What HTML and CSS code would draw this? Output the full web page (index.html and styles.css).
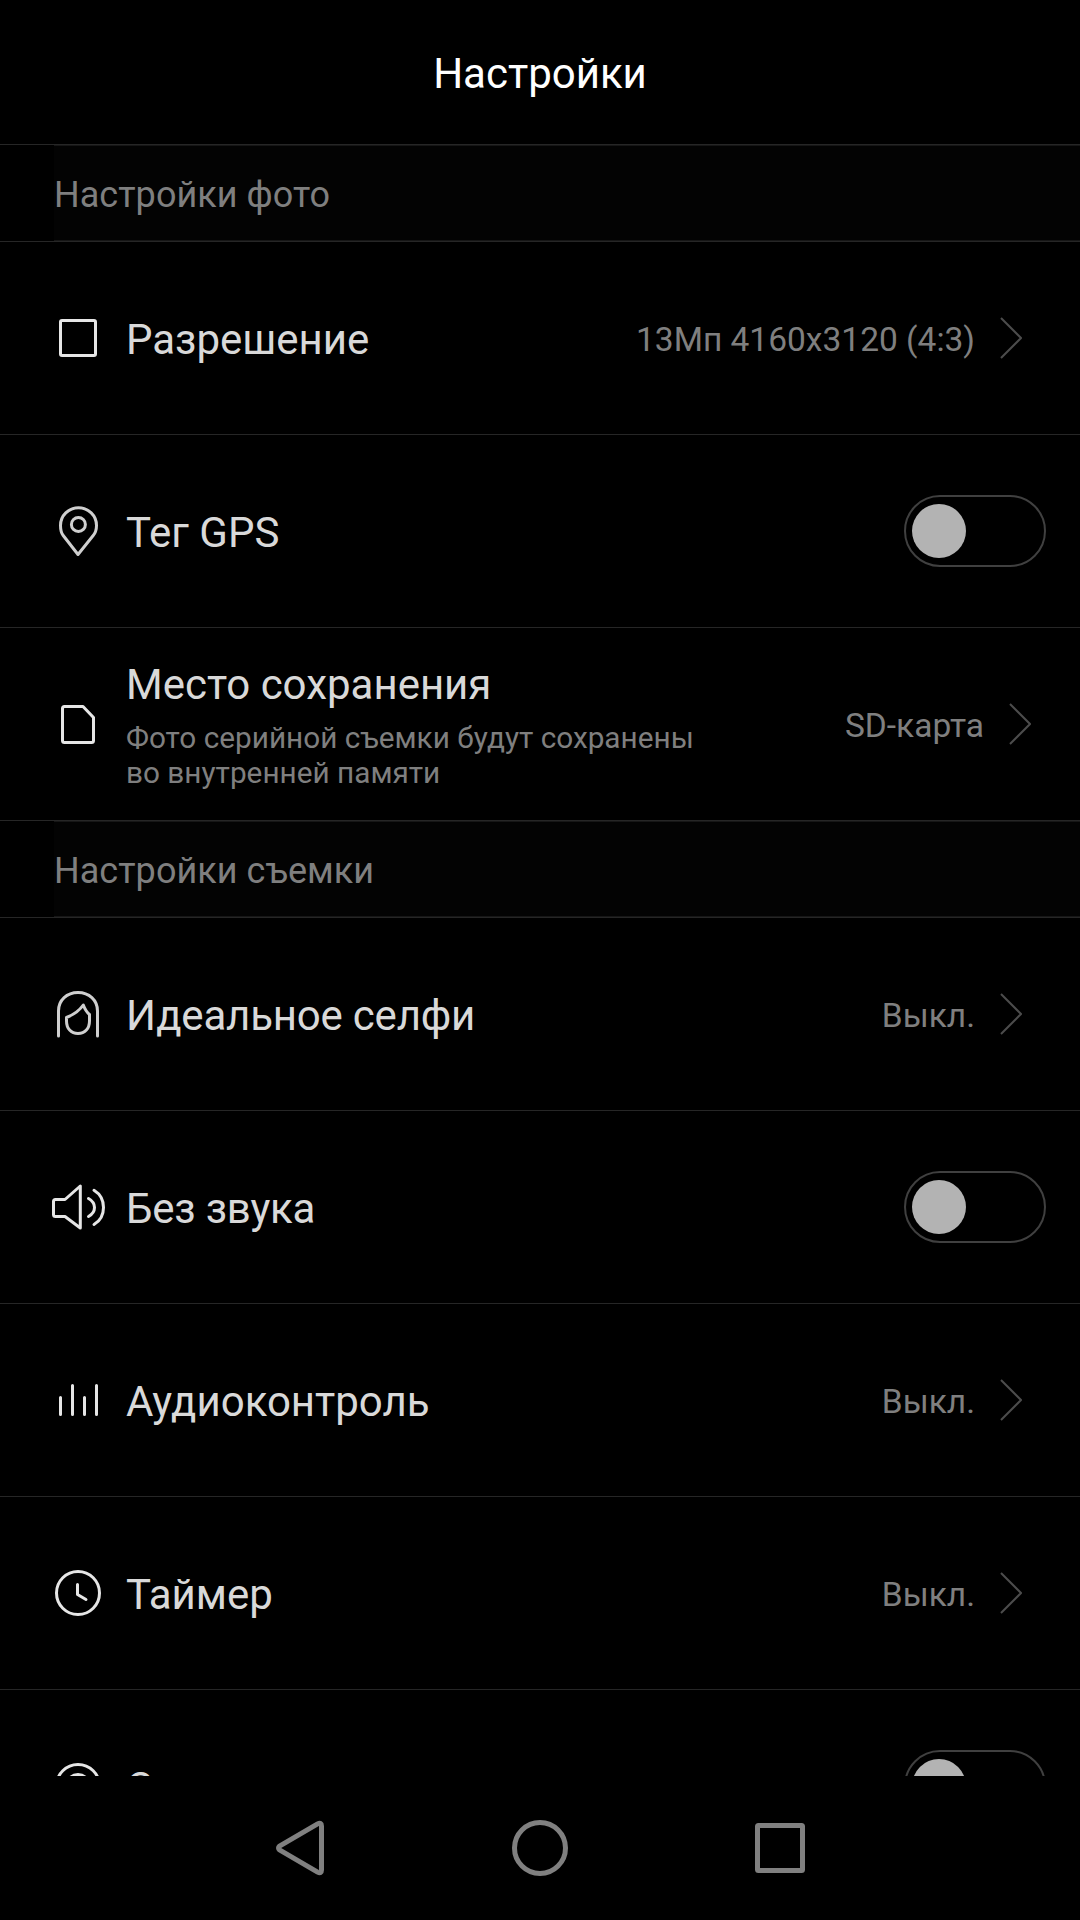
FILE: index.html
```html
<!DOCTYPE html>
<html lang="ru">
<head>
<meta charset="utf-8">
<title>Настройки</title>
<link rel="stylesheet" href="styles.css">
</head>
<body>
<div class="screen">
  <header class="header"><h1 class="header-title">Настройки</h1></header>
  <main class="list">
    <div class="section"><h2 class="section-title">Настройки фото</h2></div>

    <div class="row">
      <svg class="icon" viewBox="0 0 60 60"><rect x="12.5" y="12.5" width="35" height="35" rx="1.5"/></svg>
      <div class="label"><span class="name">Разрешение</span></div>
      <span class="value">13Мп 4160x3120 (4:3)</span>
      <svg class="chevron" viewBox="0 0 22 42"><path d="M1 1L21 21L1 41"/></svg>
    </div>

    <div class="row">
      <svg class="icon soft" viewBox="0 0 60 60"><path d="M30 53.5L15.200 34.500C12.800 31.500 12.500 27.500 12.500 24.500A18 17.800 0 0 1 48.500 24.500C48.500 27.500 47.700 31.500 45.200 34.500Z"/><circle cx="30.400" cy="23.400" r="7"/></svg>
      <div class="label"><span class="name">Тег GPS</span></div>
      <div class="toggle"><div class="knob"></div></div>
    </div>

    <div class="row">
      <svg class="icon" viewBox="0 0 60 60"><path d="M16.500 12.500H35L45.500 23.500V46.500Q45.500 48.500 43.500 48.500H16.500Q14.500 48.500 14.500 46.500V14.500Q14.500 12.500 16.500 12.500Z"/></svg>
      <div class="label label-tall">
        <span class="name">Место сохранения</span>
        <span class="note">Фото серийной съемки будут сохранены<br>во внутренней памяти</span>
      </div>
      <span class="value">SD-карта</span>
      <svg class="chevron chevron-wide" viewBox="0 0 22 42"><path d="M1 1L21 21L1 41"/></svg>
    </div>

    <div class="section"><h2 class="section-title">Настройки съемки</h2></div>

    <div class="row">
      <svg class="icon soft" viewBox="0 0 60 60"><path d="M10.500 52V27C10.500 16 19 8.500 30 8.500S49.500 16 49.500 27V52"/><path d="M18.500 33.500C26 30.500 31.500 26.500 35.300 21C37 25.500 39 28.500 41.500 30.500V37C41.500 44.500 37 49.500 30 49.500S18.500 44.500 18.500 37Z"/></svg>
      <div class="label"><span class="name name-tight">Идеальное селфи</span></div>
      <span class="value">Выкл.</span>
      <svg class="chevron" viewBox="0 0 22 42"><path d="M1 1L21 21L1 41"/></svg>
    </div>

    <div class="row">
      <svg class="icon" viewBox="0 0 60 60"><path d="M7.500 22.500H17L32.300 9V51L17 39.500H7.500Q5.500 39.500 5.500 37.500V24.500Q5.500 22.500 7.500 22.500Z"/><path d="M40.500 21.500C44 23.500 46.500 27 46.500 30.500S44 37.500 40.500 39.500M46 13.300C52 17 55.500 23.500 55.500 30.500S52 44 46 47.500"/></svg>
      <div class="label"><span class="name name-tight">Без звука</span></div>
      <div class="toggle"><div class="knob"></div></div>
    </div>

    <div class="row">
      <svg class="icon" viewBox="0 0 60 60"><path d="M12.500 27.500V44.500M24.500 15.500V44.500M36.500 27.500V44.500M48.500 15.500V44.500"/></svg>
      <div class="label"><span class="name">Аудиоконтроль</span></div>
      <span class="value">Выкл.</span>
      <svg class="chevron" viewBox="0 0 22 42"><path d="M1 1L21 21L1 41"/></svg>
    </div>

    <div class="row">
      <svg class="icon" viewBox="0 0 60 60"><circle cx="30" cy="30" r="21.500"/><path d="M29.500 21.500V31.500L38 36.500"/></svg>
      <div class="label"><span class="name">Таймер</span></div>
      <span class="value">Выкл.</span>
      <svg class="chevron" viewBox="0 0 22 42"><path d="M1 1L21 21L1 41"/></svg>
    </div>

    <div class="row">
      <svg class="icon" viewBox="0 0 60 60"><circle cx="30" cy="30" r="21.500"/><circle cx="30" cy="30" r="11.500"/></svg>
      <div class="label"><span class="name">Сенсорная съемка</span></div>
      <div class="toggle"><div class="knob"></div></div>
    </div>
  </main>
  <nav class="navbar">
    <svg class="nav-icon" viewBox="0 0 60 60"><path d="M47.600 5.900Q51.500 3.800 51.500 8V52Q51.500 56.200 47.600 54.100L9.500 31.800Q7.500 30 9.500 28.200Z"/></svg>
    <svg class="nav-icon" viewBox="0 0 60 60"><circle cx="30" cy="30" r="25.500"/></svg>
    <svg class="nav-icon" viewBox="0 0 60 60"><rect x="7.500" y="7.500" width="45" height="45" rx="1"/></svg>
  </nav>
</div>
</body>
</html>
```
FILE: styles.css
```css
* {
  box-sizing: border-box;
}

body {
  margin: 0;
  background: #000;
  font-family: Roboto, "Noto Sans", sans-serif;
}

.screen {
  display: flex;
  flex-direction: column;
  width: 1080px;
  height: 1920px;
  overflow: hidden;
  background: #000;
}

.header {
  display: flex;
  flex: none;
  align-items: center;
  justify-content: center;
  height: 145px;
  padding-top: 3px;
  border-bottom: 1px solid #262626;
}

.header-title {
  margin: 0;
  color: #fff;
  font-size: 42px;
  font-weight: 400;
  line-height: 50px;
}

.list {
  flex: 1;
  min-height: 0;
  overflow: hidden;
}

.section {
  height: 97px;
  padding-left: 54px;
  border-bottom: 1px solid #262626;
}

.section-title {
  display: flex;
  align-items: center;
  height: 96px;
  margin: 0;
  padding-top: 3px;
  border: solid #161616;
  border-width: 1px 0;
  background: #030303;
  color: #7f7f7f;
  font-size: 36px;
  font-weight: 400;
  letter-spacing: 0.05px;
}

.row {
  display: flex;
  align-items: center;
  height: 193px;
  padding: 0 34px 0 48px;
  border-bottom: 1px solid #262626;
}

.icon {
  flex: none;
  width: 60px;
  height: 60px;
  margin-right: 18px;
  fill: none;
  stroke: #e6e6e6;
  stroke-width: 3;
  stroke-linecap: round;
  stroke-linejoin: round;
}

.icon.soft {
  stroke: #cfcfcf;
}

.label {
  display: flex;
  flex: 1;
  flex-direction: column;
  padding-top: 4px;
}

.label-tall {
  padding-top: 2px;
}

.name {
  color: #d9d9d9;
  font-size: 42px;
  line-height: 50px;
}

.name-tight {
  letter-spacing: -0.2px;
}

.note {
  margin-top: 10px;
  color: #7f7f7f;
  font-size: 29.75px;
  line-height: 35px;
}

.value {
  padding-top: 2px;
  color: #7f7f7f;
  font-size: 33.5px;
}

.chevron {
  flex: none;
  width: 22px;
  height: 42px;
  margin: 0 24px 0 25px;
  fill: none;
  stroke: #4c4c4c;
  stroke-width: 2;
}

.chevron-wide {
  margin-right: 15px;
}

.toggle {
  display: flex;
  align-items: center;
  width: 142px;
  height: 72px;
  padding-left: 6px;
  border: 2px solid #404040;
  border-radius: 36px;
}

.knob {
  width: 54px;
  height: 54px;
  border-radius: 50%;
  background: #b3b3b3;
}

.navbar {
  display: flex;
  flex: none;
  align-items: center;
  justify-content: center;
  gap: 180px;
  height: 144px;
}

.nav-icon {
  width: 60px;
  height: 60px;
  fill: none;
  stroke: #808080;
  stroke-width: 5;
  stroke-linejoin: round;
}
```
